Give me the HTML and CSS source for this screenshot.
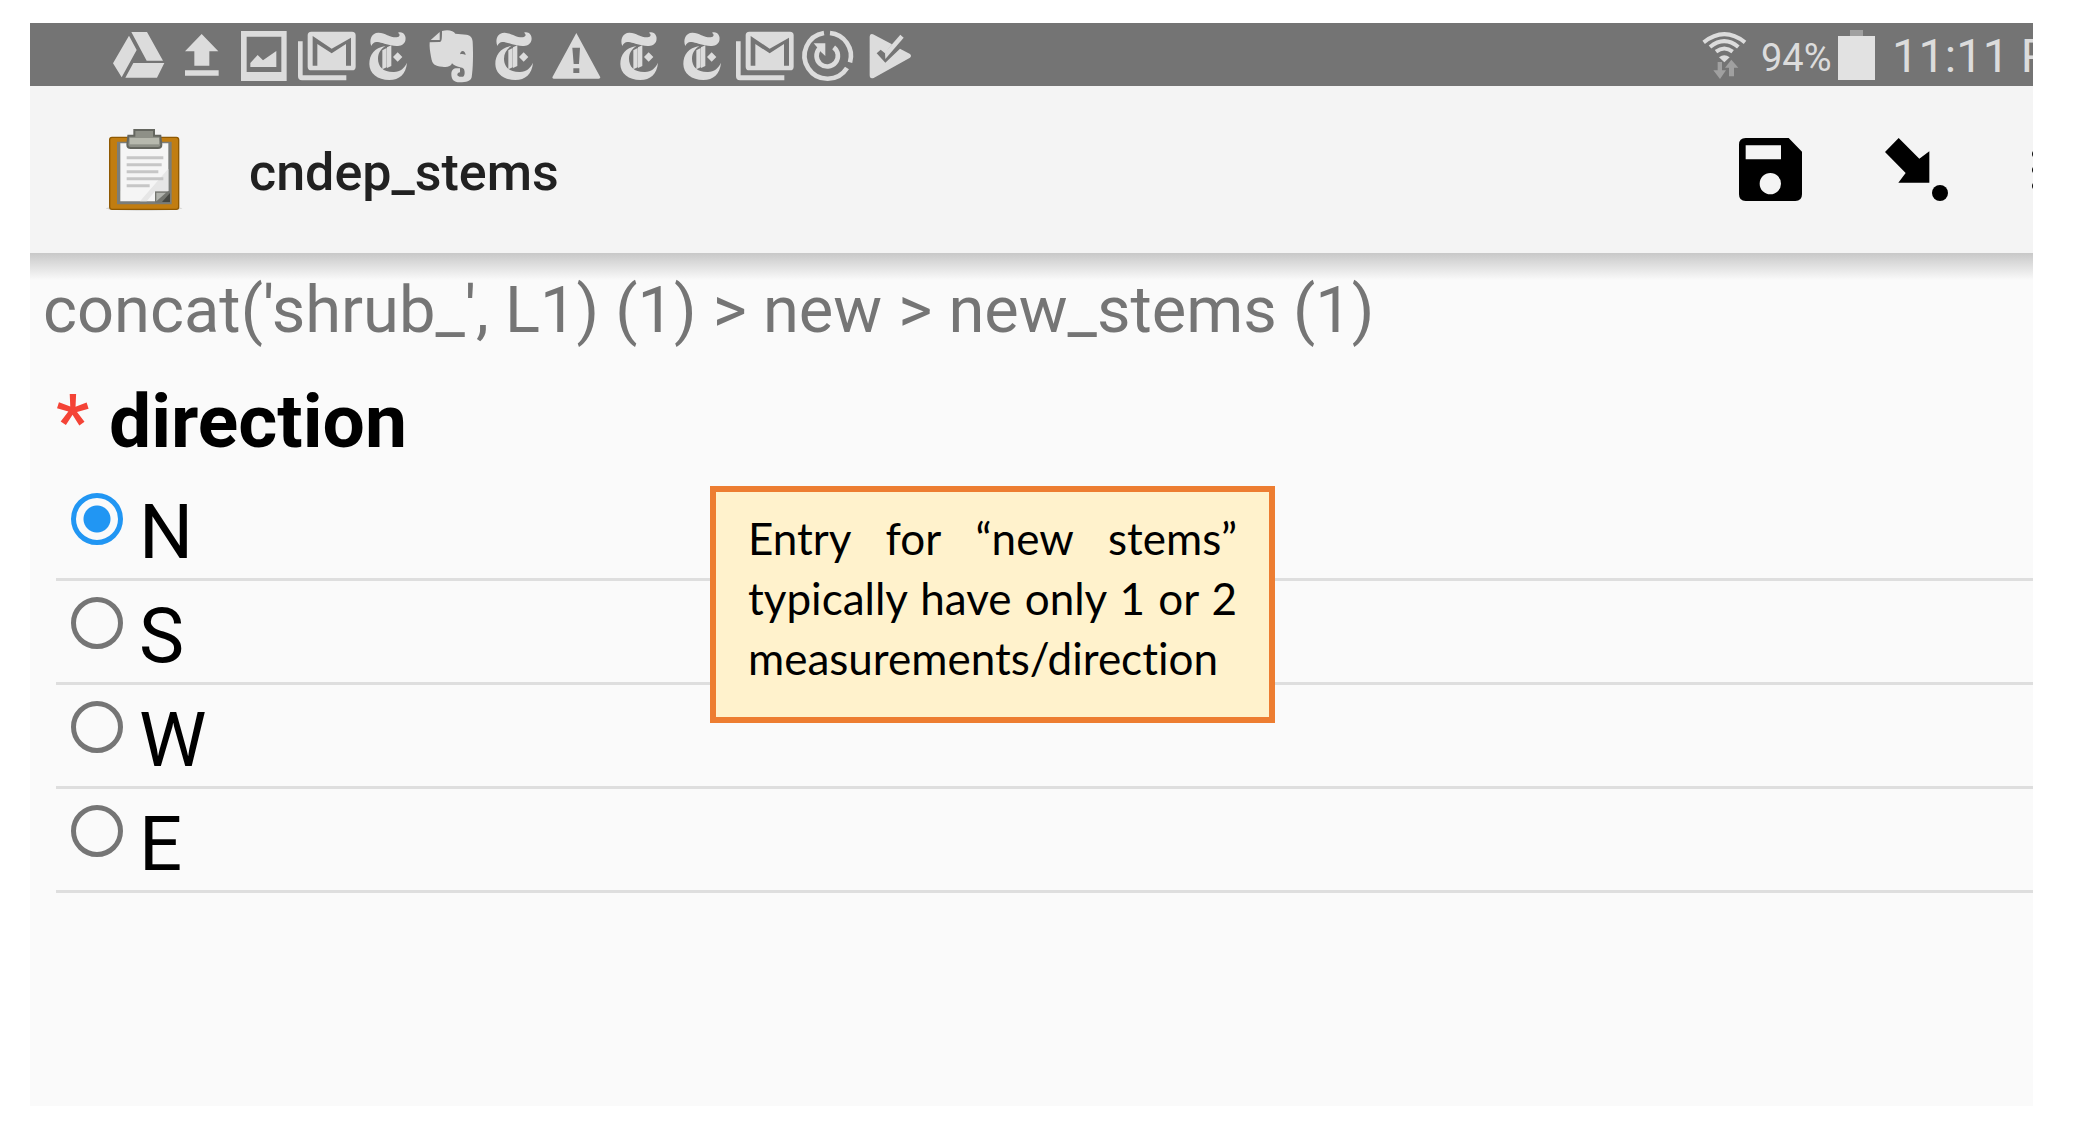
FILE: index.html
```html
<!DOCTYPE html>
<html lang="en">
<head>
<meta charset="utf-8">
<title>cndep_stems</title>
<link rel="stylesheet" href="styles.css">
</head>
<body>
<svg class="defs" aria-hidden="true">
  <symbol id="nyt" viewBox="1076 69 186 189">
    <path d="M1116 138C1108 118 1118 97 1138 98C1158 99 1172 113 1192 112C1203 110 1203 103 1196 98C1212 93 1222 108 1218 122C1212 140 1192 140 1175 136C1155 131 1138 125 1130 126C1122 128 1119 132 1116 138Z"/>
    <path d="M1158 138C1125 143 1110 165 1110 192C1110 220 1135 240 1170 240C1200 240 1220 222 1223 188C1215 205 1203 215 1184 216C1152 217 1136 200 1136 176C1136 160 1144 147 1158 138Z"/>
    <path d="M1149 151L1162 144V202L1149 208ZM1163 142L1176 136V198L1163 204ZM1195 157L1209 171L1195 185L1181 171Z"/>
  </symbol>
  <symbol id="gmail" viewBox="888 69 186 189">
    <path fill-rule="evenodd" d="M934 95H1056Q1067 95 1067 106V200Q1067 211 1056 211H934Q923 211 923 200V106Q923 95 934 95ZM938 113V197H952V132L995 160L1038 132V197H1053V113L995 146L938 108Z"/>
    <path d="M894 124H908V226H1039V241H906Q894 241 894 229Z"/>
  </symbol>
</svg>

<div class="screen">
  <header class="status">
    <div class="notices">
      <svg viewBox="325 69 186 189"><path d="M395 96H442L490 182H441ZM388 107L411 150L366 232L340 190ZM401 189H494L472 233H377Z"/></svg>
      <svg viewBox="513 69 186 189"><path d="M605 102L655 154H628V197H583V154H555ZM555 211H656V227H555Z"/></svg>
      <svg viewBox="700 69 186 189"><path fill-rule="evenodd" d="M724 93H861V243H724ZM741 110V216H845V110Z"/><path d="M752 201V189L774 165L790 181L830 153V201Z"/></svg>
      <svg><use href="#gmail"/></svg>
      <svg><use href="#nyt"/></svg>
      <svg viewBox="1264 69 186 189"><path d="M1320 96V120H1293Z"/><path fill-rule="evenodd" d="M1327 93C1345 88 1362 92 1367 101L1400 104C1412 106 1418 112 1419 125C1421 165 1420 205 1416 232C1413 244 1400 247 1380 247C1362 247 1355 238 1355 222C1355 208 1364 203 1376 205H1381V217C1371 218 1370 229 1380 230H1390C1396 228 1396 215 1393 208C1390 200 1370 204 1357 190C1354 200 1340 203 1328 200C1305 197 1298 195 1294 170C1291 155 1289 140 1290 127L1320 126C1326 125 1327 121 1327 93ZM1381 163C1383 149 1396 149 1398 165C1392 162 1387 161 1381 163Z"/></svg>
      <svg><use href="#nyt"/></svg>
      <svg viewBox="200 69 186 189"><path fill-rule="evenodd" d="M291 99L363 232Q363 236 358 236H223Q219 236 219 232ZM279 143L283 192H299L302 143ZM282 205V219H300V205Z"/></svg>
      <svg><use href="#nyt"/></svg>
      <svg><use href="#nyt"/></svg>
      <svg><use href="#gmail"/></svg>
      <svg viewBox="951 69 186 189"><g class="stroke"><path d="M1032 99A69 69 0 1 0 1101 204M1050 99A69 69 0 0 1 1110 187"/><path d="M1061 142A32 32 0 1 1 1018 146"/></g><path d="M1001 130H1036V168L1024 157Z"/></svg>
      <svg viewBox="1139 69 186 189"><path d="M1171 110Q1171 100 1181 103L1238 133L1217 160L1204 149L1192 160L1218 188L1262 146L1292 162Q1298 168 1292 173L1183 234Q1171 238 1171 226Z"/><path d="M1217 157L1263 104L1273 113L1218 177Z"/></svg>
    </div>
    <div class="system">
      <svg class="wifi" viewBox="126 90 138 150"><g class="arcs"><path d="M134 127Q196 78 258 127M153 141Q196 106 238 141M171 155Q196 136 221 155"/></g><path d="M180 172Q196 160 212 172L196 187Z"/><path class="dim" d="M176 186H189V211H201L183 237L163 211H176ZM217 179L238 203H225V229H210V203H198Z"/></svg>
      <span class="percent">94%</span>
      <svg class="battery" viewBox="0 0 37 50"><path class="dim" d="M12 0H25V6H12Z"/><path d="M0 6H37V50H0Z"/></svg>
      <span class="clock">11:11 PM</span>
    </div>
  </header>

  <div class="appbar">
    <svg class="clipboard" viewBox="315 375 240 255">
      <ellipse cx="432" cy="619" rx="115" ry="7" fill="#d8d8d6"/>
      <rect x="329" y="406" width="207" height="216" rx="7" fill="#c17d11" stroke="#8f5902" stroke-width="4"/>
      <path d="M351 419H515V607H351Z" fill="#7b7d79"/>
      <path d="M361 424H505V567L466 598H361Z" fill="#f5f5f5"/>
      <path d="M505 500V568H465L440 598H420Z" fill="#e6e6e6"/>
      <path d="M465 568H510V602H465Z" fill="#73756f"/>
      <path d="M469 572H498L469 598Z" fill="#b2b4ae"/>
      <path d="M510 573V600H486Z" fill="#454742"/>
      <path d="M380 467H490M380 488H485M380 509H475M380 530H490M380 551H449" stroke="#c6c6c6" stroke-width="9"/>
      <path d="M403 384H462V401H481L484 428Q484 438 474 438H392Q382 438 382 428L385 401H403Z" fill="#8e9087" stroke="#64665f" stroke-width="6"/>
      <path d="M389 408H477V427H389Z" fill="#b7b9ae"/>
    </svg>
    <h1>cndep_stems</h1>
    <button class="tool" type="button" aria-label="Save form">
      <svg viewBox="238 413 189 189"><path fill-rule="evenodd" d="M258 413H387L427 454V582Q427 602 407 602H258Q238 602 238 582V433Q238 413 258 413ZM258 435V477H364V435ZM332 518A32 32 0 1 0 332 582A32 32 0 1 0 332 518Z"/></svg>
    </button>
    <button class="tool" type="button" aria-label="Go to prompt">
      <svg viewBox="676 413 189 189"><path d="M717 413L779 475L809 453V547H716L738 518L676 455Z"/><circle cx="841" cy="578" r="24"/></svg>
    </button>
    <button class="more" type="button" aria-label="More options">
      <svg viewBox="0 0 12 42"><circle cx="6" cy="5" r="5"/><circle cx="6" cy="21" r="5"/><circle cx="6" cy="37" r="5"/></svg>
    </button>
  </div>

  <main class="form">
    <p class="path">concat('shrub_', L1) (1) &gt; new &gt; new_stems (1)</p>
    <fieldset>
      <legend><span class="required">*</span> direction</legend>
      <label class="option"><input type="radio" name="direction" value="N" checked>N</label>
      <label class="option"><input type="radio" name="direction" value="S">S</label>
      <label class="option"><input type="radio" name="direction" value="W">W</label>
      <label class="option"><input type="radio" name="direction" value="E">E</label>
    </fieldset>
  </main>

  <aside class="callout">Entry for “new stems” typically have only 1 or 2 measurements/direction</aside>
</div>
</body>
</html>
```

FILE: styles.css
```css
* { box-sizing: border-box; }

body {
  margin: 0;
  padding: 23px 52px 24px 30px;
  background: #fff;
  font-family: Roboto, "Liberation Sans", sans-serif;
}

.defs { display: none; }

.screen {
  position: relative;
  display: flex;
  flex-direction: column;
  min-height: calc(100vh - 47px);
  overflow: hidden;
  background: #fafafa;
}

/* Status bar */
.status {
  display: flex;
  justify-content: space-between;
  height: 63px;
  padding-left: 78px;
  background: #747474;
  color: #dcdcdc;
  fill: #dcdcdc;
}

.notices {
  display: grid;
  grid-template-columns: repeat(13, 1fr);
  width: 814px;
}

.notices svg { width: 62px; height: 63px; }

.stroke { fill: none; stroke: #dcdcdc; stroke-width: 14; }

.system { display: flex; align-items: flex-start; }

.wifi { width: 46px; height: 50px; margin: 7px 14px 0 0; }
.arcs { fill: none; stroke: #dcdcdc; stroke-width: 12; }
.dim { fill: #a0a0a0; }

.percent { width: 77px; font-size: 38px; line-height: 70px; }
.battery { width: 37px; height: 50px; margin: 7px 17px 0 0; fill: #e2e2e2; }

.clock {
  width: 141px;
  overflow: hidden;
  white-space: nowrap;
  font-size: 47px;
  line-height: 66px;
}

/* Title bar */
.appbar {
  display: flex;
  align-items: center;
  height: 167px;
  padding-left: 75px;
  background: #f4f4f4;
}

.clipboard { width: 80px; height: 85px; }

h1 {
  flex: 1;
  margin: 0 0 0 64px;
  padding-top: 6px;
  color: #212121;
  font-size: 52px;
  line-height: 60px;
  font-weight: 500;
}

button { padding: 0; border: 0; background: none; }

.tool { width: 63px; height: 63px; margin-right: 83px; }
.tool svg { display: block; width: 63px; height: 63px; }

.more { width: 2px; height: 42px; overflow: hidden; }
.more svg { display: block; width: 12px; height: 42px; }

/* Question */
.form {
  flex: 1;
  padding: 17px 0 0 26px;
  background: linear-gradient(#c8c8c8, #fafafa 27px);
}

.path {
  margin: 0 0 26px -13px;
  color: #757575;
  font-size: 65px;
  line-height: 80px;
}

fieldset { min-width: 0; margin: 0; padding: 0; border: 0; }

legend {
  margin-bottom: 11px;
  padding: 0;
  font-size: 75px;
  line-height: 90px;
  font-weight: 700;
}

.required { margin-right: 1px; color: #f44336; font-weight: 500; }

.option {
  display: flex;
  align-items: flex-start;
  gap: 16px;
  height: 104px;
  padding: 10px 0 0 15px;
  border-bottom: 3px solid #dedede;
  font-size: 76px;
  line-height: 90px;
}

input {
  appearance: none;
  width: 52px;
  height: 52px;
  margin: 6px 0 0;
  border: 5px solid #757575;
  border-radius: 50%;
}

input:checked {
  border-color: #2196f3;
  background: radial-gradient(circle, #2196f3 13px, transparent 14px);
}

/* Annotation over the form */
.callout {
  position: absolute;
  top: 463px;
  left: 680px;
  width: 565px;
  height: 237px;
  padding: 16px 32px;
  border: 6px solid #ed7d31;
  background: #fff2cc;
  font-family: Lato, "Open Sans", sans-serif;
  font-size: 44px;
  font-variant-ligatures: none;
  line-height: 60px;
  text-align: justify;
}
```
